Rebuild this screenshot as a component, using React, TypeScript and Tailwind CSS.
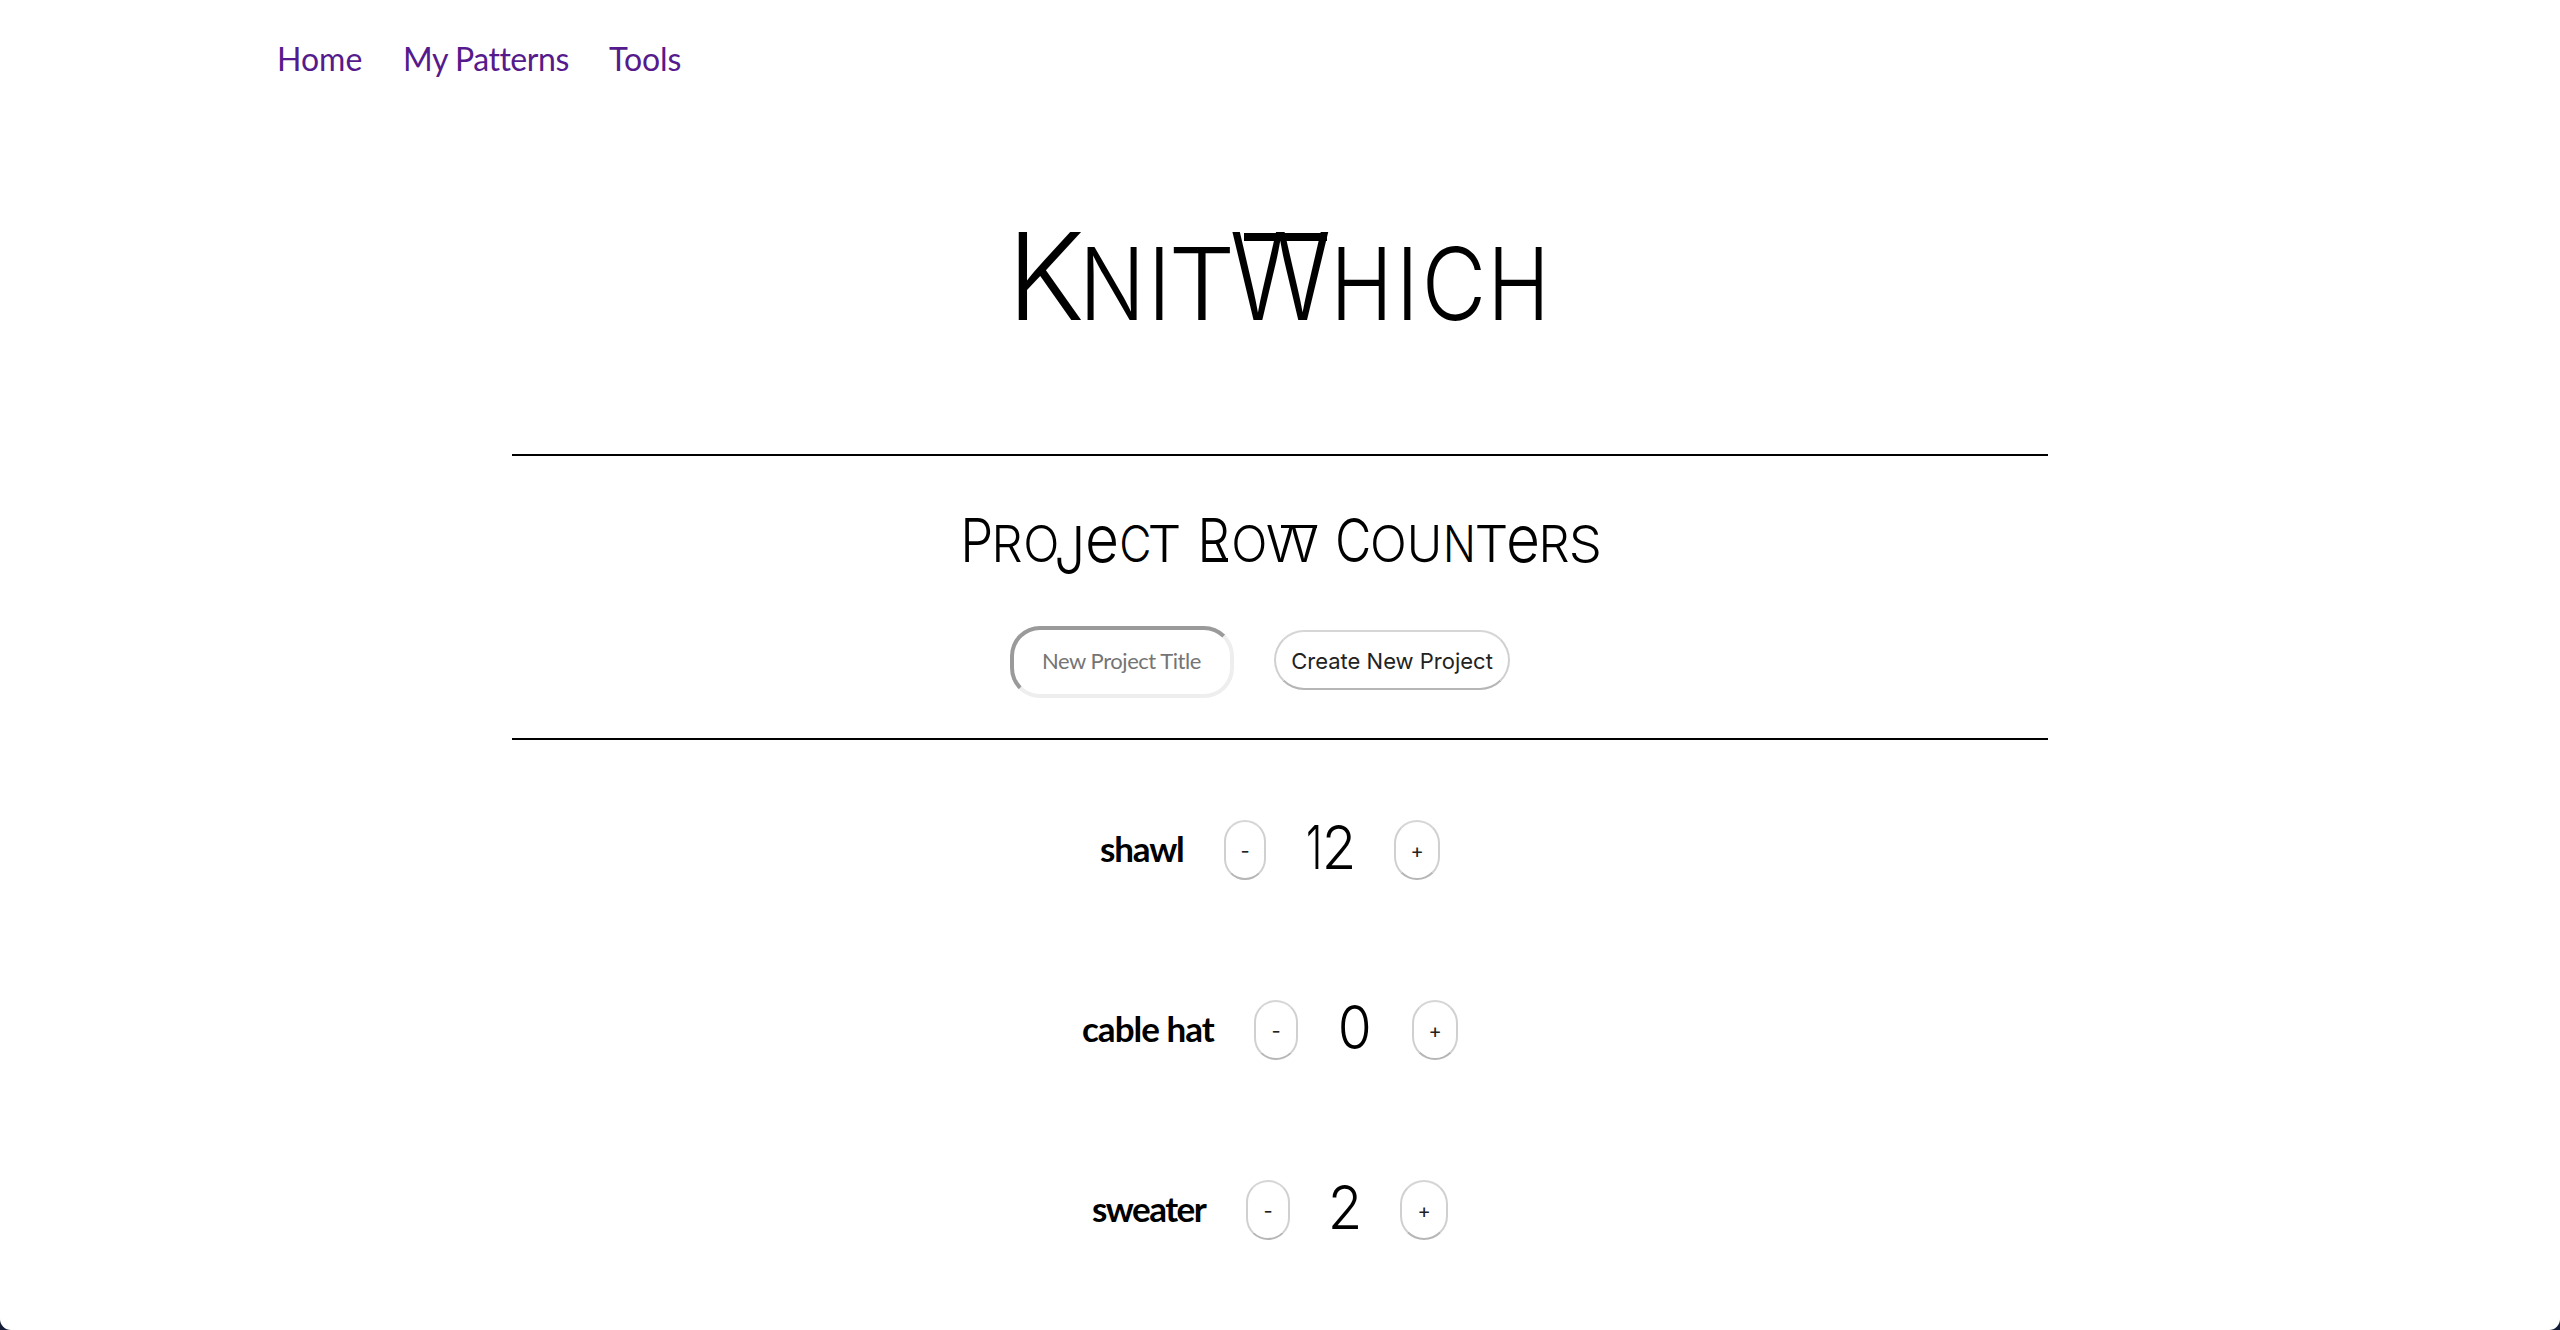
import React, { useState } from "react";

type Glyph = {
  ch: string;
  w: number;
  gap?: number;
  size: number;
  drop?: number;
  bar?: "top" | "base";
};

// Left and right ink edges of the Inter Light capitals and digits, in 1/100 em.
const INK: Record<string, [number, number]> = {
  K: [9, 62.5], N: [9, 66.8], I: [9.2, 17.8], T: [4.6, 59], W: [2.4, 94.2], H: [9, 65],
  C: [6, 67], P: [9, 57.5], R: [9, 60], O: [6, 70], J: [5, 48], e: [5.3, 53], U: [9, 65],
  S: [6, 57.5], "0": [6, 56], "1": [5, 30.3], "2": [7.5, 54.5],
};

const TITLE: Glyph[] = [
  { ch: "K", w: 64, size: 121 },
  { ch: "n", w: 50, gap: 5, size: 101 },
  { ch: "i", w: 7.6, gap: 19, size: 101 },
  { ch: "t", w: 57.5, gap: 9.5, size: 101 },
  { ch: "W", w: 96.5, gap: 1.4, size: 121, bar: "top" },
  { ch: "h", w: 47, gap: 9, size: 101 },
  { ch: "i", w: 7.6, gap: 19, size: 101 },
  { ch: "c", w: 54, gap: 16, size: 101 },
  { ch: "h", w: 47, gap: 13.5, size: 101 },
];

const SUBTITLE: Glyph[][] = [
  [
    { ch: "P", w: 25.5, size: 60 },
    { ch: "r", w: 25, gap: 6, size: 51 },
    { ch: "o", w: 30.5, gap: 4.5, size: 51 },
    { ch: "j", w: 23.5, gap: 1, size: 66, drop: 12 },
    { ch: "e", w: 28, gap: 7.5, size: 66 },
    { ch: "c", w: 27, gap: 5.5, size: 51 },
    { ch: "t", w: 29, gap: 1.5, size: 51 },
  ],
  [
    { ch: "R", w: 26, gap: 23, size: 60, bar: "base" },
    { ch: "o", w: 30.5, gap: 5.5, size: 51 },
    { ch: "w", w: 50.5, gap: 2.5, size: 51, bar: "top" },
  ],
  [
    { ch: "C", w: 30.5, gap: 20.5, size: 60 },
    { ch: "o", w: 31, gap: 4.5, size: 51 },
    { ch: "u", w: 27, gap: 7, size: 51 },
    { ch: "n", w: 25, gap: 9, size: 51 },
    { ch: "t", w: 29, gap: 5, size: 51 },
    { ch: "e", w: 28, gap: 3, size: 66 },
    { ch: "r", w: 25, gap: 6.5, size: 51 },
    { ch: "s", w: 27, gap: 3.5, size: 51 },
  ],
];

function Letter({ g }: { g: Glyph }) {
  const lower = g.ch === "e";
  const small = g.ch >= "a" && g.ch <= "z" && g.ch !== "e" && g.ch !== "j";
  const [l, r] = INK[lower ? "e" : g.ch.toUpperCase()];
  const scale = g.w / (((r - l) * g.size) / 100);
  const shift = (-l * g.size * scale) / 100;
  return (
    <span
      className={`relative block shrink-0 leading-none ${small ? "font-[340]" : g.size > 100 ? "font-[300]" : "font-[325]"}`}
      style={{ width: g.w, marginLeft: g.gap ?? 0, fontSize: g.size }}
    >
      <span
        className={`block w-max origin-left ${lower ? "" : "uppercase"}`}
        style={{ transform: `translate(${shift}px, ${g.drop ?? 0}px) scaleX(${scale})` }}
      >
        {g.ch}
      </span>
      {g.bar === "top" && <span className="absolute right-[0.01em] top-[0.137em] h-[0.066em] w-[0.69em] bg-black" />}
      {g.bar === "base" && <span className="absolute left-[0.04em] top-[0.795em] h-[0.068em] w-[0.39em] bg-black" />}
    </span>
  );
}

function StepButton({ label, className, onClick }: { label: string; className: string; onClick: () => void }) {
  return (
    <button
      onClick={onClick}
      className={`flex h-[60px] shrink-0 items-center justify-center rounded-full border-2 border-[#d0d0d0] border-t-[#d6d6d6] border-b-[#b6b6b6] bg-white pt-px text-[20px] leading-none text-[#222] ${className}`}
    >
      {label}
    </button>
  );
}

const ROWS = [
  {
    name: "shawl", start: 12, label: "w-[84px] tracking-[-1.2px]", minus: "w-[42px]", count: "w-[48px]", plus: "w-[46px]",
  },
  {
    name: "cable hat", start: 0, label: "w-[132px] tracking-[-1px]", minus: "w-[44px]", count: "w-[34px]", plus: "w-[46px]",
  },
  {
    name: "sweater", start: 2, label: "w-[114px] tracking-[-1.55px]", minus: "w-[44px]", count: "w-[30px]", plus: "w-[48px]",
  },
];

const DIGIT: Record<string, number> = { "0": 27.5, "1": 10.5, "2": 26.5 };

function Counter({ row }: { row: (typeof ROWS)[number] }) {
  const [n, setN] = useState(row.start);
  return (
    <li className="flex h-[60px] items-center justify-center gap-10 pr-5">
      <h3 className={`shrink-0 whitespace-nowrap pb-1 font-['Lato',sans-serif] text-[35px] font-bold leading-10 ${row.label}`}>
        {row.name}
      </h3>
      <StepButton label="-" className={row.minus} onClick={() => setN(Math.max(0, n - 1))} />
      <div className={`flex shrink-0 items-baseline justify-center pb-[5px] ${row.count}`}>
        {String(n).split("").map((d, i) => (
          <Letter key={i} g={{ ch: d, w: DIGIT[d] ?? 27, gap: i ? 7 : 0, size: 61 }} />
        ))}
      </div>
      <StepButton label="+" className={row.plus} onClick={() => setN(n + 1)} />
    </li>
  );
}

export default function App() {
  return (
    <div className="h-[1330px] w-[2560px] overflow-hidden bg-[#141c38]">
      <div className="h-full rounded-b-[11px] bg-white font-['Inter',sans-serif] text-black">
        <nav className="flex pl-[277px] pt-[39px] font-['Lato',sans-serif] text-[32px] leading-10 text-[#551a8b]">
          <a className="w-[126px]">Home</a>
          <a className="w-[206px] tracking-[-0.45px]">My Patterns</a>
          <a className="tracking-[-0.1px]">Tools</a>
        </nav>

        <h1 className="mt-[137px] flex h-[121px] items-baseline justify-center">
          {TITLE.map((g, i) => (
            <Letter key={i} g={g} />
          ))}
        </h1>

        <main className="mx-auto mt-[117px] w-[1536px]">
          <section className="border-y-2 border-black pb-10 pt-[49px]">
            <h2 className="flex h-[66px] items-baseline justify-center pl-[3px]">
              {SUBTITLE.map((word, i) => (
                <span key={i} className="flex items-baseline">
                  {word.map((g, j) => (
                    <Letter key={j} g={g} />
                  ))}
                </span>
              ))}
            </h2>
            <form className="mt-[55px] flex items-center justify-center gap-10 pr-10" onSubmit={(e) => e.preventDefault()}>
              <input
                placeholder="New Project Title"
                className="h-[72px] w-[224px] rounded-[30px] border-4 border-b-[#eeeeee] border-l-[#9a9a9a] border-r-[#eeeeee] border-t-[#9a9a9a] bg-white pb-[3px] pl-7 font-['Lato',sans-serif] text-[22px] tracking-[-0.45px] placeholder:text-[#757575]"
              />
              <button className="h-[60px] w-[236px] -translate-y-0.5 whitespace-nowrap rounded-full border-2 border-[#d0d0d0] border-b-[#b6b6b6] border-t-[#d6d6d6] bg-white pt-px text-[22px] leading-none text-[#222]">
                Create New Project
              </button>
            </form>
          </section>

          <ul className="mt-20 flex flex-col gap-[120px]">
            {ROWS.map((row) => (
              <Counter key={row.name} row={row} />
            ))}
          </ul>
        </main>
      </div>
    </div>
  );
}
